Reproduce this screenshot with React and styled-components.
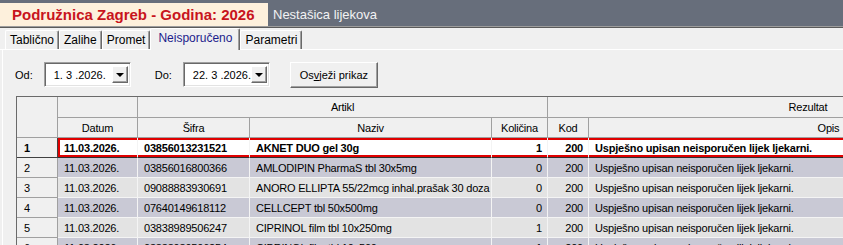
import React from "react";
import styled, { createGlobalStyle, css } from "styled-components";

const GlobalStyle = createGlobalStyle`
  html, body {
    margin: 0;
    padding: 0;
    background: #f0f0f0;
    overflow: hidden;
  }
`;

const Screen = styled.div`
  width: 843px;
  height: 245px;
  overflow: hidden;
  background: #f0f0f0;
  font-family: "Liberation Sans", Arial, sans-serif;
  color: #000;
`;

const TitleBar = styled.div`
  height: 27px;
  background: #676e7b;
  display: flex;
  align-items: flex-start;
  padding-top: 3px;
  box-sizing: border-box;
  border-bottom: 1px solid #9c9c9c;
  box-shadow: 0 1px 0 #5a5a5a;
`;

const TitleBox = styled.div`
  width: 268px;
  height: 23px;
  box-sizing: border-box;
  padding-left: 12px;
  background: #fdf0dc;
  color: #c8141c;
  font-size: 15px;
  font-weight: bold;
  line-height: 23px;
  white-space: nowrap;
`;

const Subtitle = styled.div`
  margin-left: 5px;
  color: #f2f2f4;
  font-size: 13px;
  line-height: 23px;
`;

const TabStrip = styled.div`
  margin-top: 1px;
  height: 22px;
  box-sizing: border-box;
  padding-left: 5px;
  display: flex;
  align-items: flex-end;
  border-bottom: 1px solid #fff;
`;

const Tab = styled.div`
  position: relative;
  height: ${(p) => (p.$active ? 22 : 19)}px;
  margin-bottom: ${(p) => (p.$active ? -1 : 0)}px;
  padding: 0 ${(p) => (p.$active ? 7 : 4)}px;
  box-sizing: border-box;
  border-top: 1px solid #fff;
  border-left: 1px solid #fff;
  border-right: 1px solid #696969;
  border-radius: 2px 2px 0 0;
  box-shadow: inset -1px 0 0 #a0a0a0;
  background: #f0f0f0;
  font-size: 12px;
  line-height: ${(p) => (p.$active ? 19 : 18)}px;
  color: ${(p) => (p.$active ? "#1c1c8c" : "#000")};
  z-index: ${(p) => (p.$active ? 1 : 0)};
  white-space: nowrap;
`;

const Panel = styled.div`
  display: flex;
  flex-direction: column;
  border-left: 1px solid #fff;
  margin-left: 2px;
`;

const FilterRow = styled.div`
  display: flex;
  align-items: center;
  height: 27px;
  margin-top: 11px;
  padding-left: 12px;
  font-size: 11px;
  white-space: nowrap;
`;

const Label = styled.span`
  margin-left: ${(p) => p.$gap || 0}px;
  margin-right: 11px;
`;

const DateBox = styled.div`
  width: 87px;
  height: 25px;
  box-sizing: border-box;
  display: flex;
  align-items: center;
  background: #fff;
  border-top: 1px solid #a0a0a0;
  border-left: 1px solid #a0a0a0;
  border-right: 1px solid #fff;
  border-bottom: 1px solid #fff;
  box-shadow: inset 1px 1px 0 #696969, inset -1px -1px 0 #e3e3e3;
  padding: 0 2px 0 9px;
`;

const DateText = styled.span`
  flex: 1;
  font-size: 11px;
  white-space: nowrap;
  overflow: hidden;
`;

const DropButton = styled.div`
  flex: none;
  width: 16px;
  height: 17px;
  box-sizing: border-box;
  background: #f0f0f0;
  border-top: 1px solid #fff;
  border-left: 1px solid #fff;
  border-right: 1px solid #696969;
  border-bottom: 1px solid #696969;
  box-shadow: inset -1px -1px 0 #a0a0a0;
  display: flex;
  align-items: center;
  justify-content: center;
`;

const Arrow = styled.div`
  width: 0;
  height: 0;
  border-left: 4px solid transparent;
  border-right: 4px solid transparent;
  border-top: 4px solid #000;
`;

const Button = styled.div`
  margin-left: 20px;
  width: 88px;
  height: 26px;
  box-sizing: border-box;
  display: flex;
  align-items: center;
  justify-content: center;
  background: #f0f0f0;
  border-top: 1px solid #fff;
  border-left: 1px solid #fff;
  border-right: 1px solid #696969;
  border-bottom: 1px solid #696969;
  box-shadow: inset -1px -1px 0 #a0a0a0;
  font-size: 11px;
`;

const Grid = styled.div`
  margin-top: 8px;
  margin-left: 13px;
  display: grid;
  grid-template-columns: 41px 80px 112px 242px 56px 41px 480px;
  grid-template-rows: 21px 20px repeat(6, 20px);
  width: max-content;
  border-top: 1px solid #6a6a6a;
  border-left: 1px solid #6a6a6a;
  font-size: 11px;
  letter-spacing: -0.2px;
`;

const cellBase = css`
  box-sizing: border-box;
  overflow: hidden;
  white-space: nowrap;
  display: flex;
  align-items: center;
`;

const HeadCell = styled.div`
  ${cellBase}
  grid-column: span ${(p) => p.$span || 1};
  grid-row: span ${(p) => p.$rows || 1};
  justify-content: center;
  background: #f0f0f0;
  border-right: 1px solid #a0a0a0;
  border-bottom: 1px solid #a0a0a0;
`;

const RowHead = styled.div`
  ${cellBase}
  padding-left: 7px;
  background: #f0f0f0;
  border-right: 1px solid ${(p) => (p.$selected ? "#404040" : "#a0a0a0")};
  border-bottom: 1px solid ${(p) => (p.$selected ? "#404040" : "#a0a0a0")};
  font-weight: ${(p) => (p.$selected ? "bold" : "normal")};
`;

const tones = {
  dark: "#c9c9d5",
  light: "#e3e3e3",
};

const Cell = styled.div`
  ${cellBase}
  padding: 0 6px;
  justify-content: ${(p) => (p.$right ? "flex-end" : "flex-start")};
  padding-right: ${(p) => (p.$right ? 5 : 6)}px;
  background: ${(p) => (p.$selected ? "#fff" : tones[p.$tone])};
  border-right: 1px solid #f4f4f4;
  border-bottom: 1px solid ${(p) => (p.$selected ? "#303030" : "#f4f4f4")};
  ${(p) =>
    p.$selected &&
    css`
      font-weight: bold;
      box-shadow: inset 0 2px 0 #e00000, inset 0 -2px 0 #e00000
        ${p.$first ? ", inset 2px 0 0 #e00000" : ""};
    `}
`;

const OK = "Uspješno upisan neisporučen lijek ljekarni.";

const rows = [
  ["11.03.2026.", "03856013231521", "AKNET DUO gel 30g", "1", "200", OK],
  ["11.03.2026.", "03856016800366", "AMLODIPIN PharmaS tbl 30x5mg", "0", "200", OK],
  ["11.03.2026.", "09088883930691", "ANORO ELLIPTA 55/22mcg inhal.prašak 30 doza", "0", "200", OK],
  ["11.03.2026.", "07640149618112", "CELLCEPT tbl 50x500mg", "0", "200", OK],
  ["11.03.2026.", "03838989506247", "CIPRINOL film tbl 10x250mg", "1", "200", OK],
  ["11.03.2026.", "03838989506254", "CIPRINOL film tbl 10x500mg", "1", "200", OK],
];

const tabs = ["Tablično", "Zalihe", "Promet", "Neisporučeno", "Parametri"];

export default function App() {
  return (
    <Screen>
      <GlobalStyle />
      <TitleBar>
        <TitleBox>Podružnica Zagreb - Godina: 2026</TitleBox>
        <Subtitle>Nestašica lijekova</Subtitle>
      </TitleBar>

      <TabStrip>
        {tabs.map((t) => (
          <Tab key={t} $active={t === "Neisporučeno"}>
            {t}
          </Tab>
        ))}
      </TabStrip>

      <Panel>
        <FilterRow>
          <Label>Od:</Label>
          <DateBox>
            <DateText>1. 3 .2026.</DateText>
            <DropButton>
              <Arrow />
            </DropButton>
          </DateBox>
          <Label $gap={24}>Do:</Label>
          <DateBox>
            <DateText>22. 3 .2026.</DateText>
            <DropButton>
              <Arrow />
            </DropButton>
          </DateBox>
          <Button>
            <span>
              Os<u>v</u>ježi prikaz
            </span>
          </Button>
        </FilterRow>

        <Grid>
          <HeadCell $rows={2} />
          <HeadCell />
          <HeadCell $span={3}>Artikl</HeadCell>
          <HeadCell $span={2}>Rezultat</HeadCell>
          <HeadCell>Datum</HeadCell>
          <HeadCell>Šifra</HeadCell>
          <HeadCell>Naziv</HeadCell>
          <HeadCell>Količina</HeadCell>
          <HeadCell>Kod</HeadCell>
          <HeadCell>Opis</HeadCell>

          {rows.map((r, i) => {
            const selected = i === 0;
            const tone = i % 2 === 1 ? "dark" : "light";
            return (
              <React.Fragment key={i}>
                <RowHead $selected={selected}>{i + 1}</RowHead>
                {r.map((v, j) => (
                  <Cell
                    key={j}
                    $tone={tone}
                    $selected={selected}
                    $first={j === 0}
                    $right={j === 3 || j === 4}
                  >
                    {v}
                  </Cell>
                ))}
              </React.Fragment>
            );
          })}
        </Grid>
      </Panel>
    </Screen>
  );
}
